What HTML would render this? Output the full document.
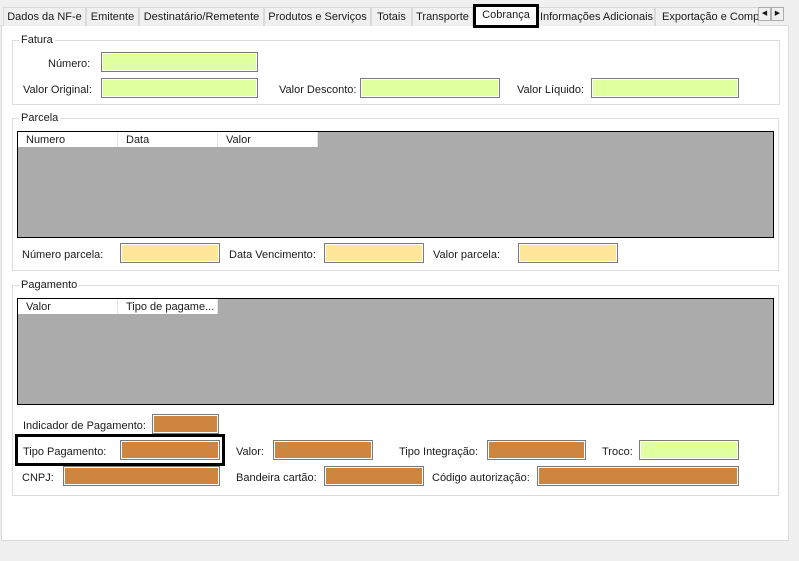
<!DOCTYPE html><html><head><style>
*{margin:0;padding:0;box-sizing:border-box}
body{width:799px;height:561px;background:#f0f0f0;position:relative;overflow:hidden;font-family:"Liberation Sans",sans-serif;font-size:11px;color:#1a1a1a}
div,span{white-space:nowrap}
.a{position:absolute}
.tab{position:absolute;top:7px;height:19px;border:1px solid #dadada;border-bottom:none;background:#f0f0f0;line-height:19px;text-align:center;overflow:hidden}
.g{position:absolute;border:1px solid #dcdcdc}
.gl{position:absolute;top:-8px;left:6px;background:#fff;padding:0 2px;line-height:14px}
.i{position:absolute;height:20px;border:1px solid #7a7a7a;outline:1px solid #fff;outline-offset:-2px}
.gr{background:#e0ff9e}.ye{background:#ffe699}.or{background:#cd853f}
.grid{position:absolute;background:#ababab;border:1px solid #000}
.h{position:absolute;top:0;height:15px;background:#fff;border-right:1px solid #e5e5e5;line-height:16px;padding-left:8px;overflow:hidden}
.l{position:absolute;line-height:14px}
</style></head><body>
<div class="a" style="left:1px;top:25px;width:788px;height:516px;background:#fff;border:1px solid #dadada"></div>
<div class="tab" style="left:3px;width:83px">Dados da NF-e</div>
<div class="tab" style="left:86px;width:53px">Emitente</div>
<div class="tab" style="left:139px;width:125px">Destinatário/Remetente</div>
<div class="tab" style="left:264px;width:107px">Produtos e Serviços</div>
<div class="tab" style="left:371px;width:41px">Totais</div>
<div class="tab" style="left:412px;width:61px">Transporte</div>
<div class="tab" style="left:538px;width:117px">Informações Adicionais</div>
<div class="tab" style="left:655px;width:104px;text-align:left;padding-left:6px">Exportação e Compra</div>
<div class="a" style="left:473px;top:4px;width:66px;height:24px;background:#fff;border:3px solid #000;text-align:center;line-height:17px">Cobrança</div>
<div class="a" style="left:758px;top:7px;width:13px;height:14px;border:1px solid #adadad;background:#f0f0f0;font-size:7px;text-align:center;line-height:12px">◀</div>
<div class="a" style="left:771px;top:7px;width:13px;height:14px;border:1px solid #adadad;background:#f0f0f0;font-size:7px;text-align:center;line-height:12px">▶</div>

<div class="g" style="left:12px;top:40px;width:768px;height:65px"><span class="gl">Fatura</span></div>
<div class="l" style="left:48px;top:57px">Número:</div><div class="i gr" style="left:101px;top:52px;width:157px"></div>
<div class="l" style="left:23px;top:83px">Valor Original:</div><div class="i gr" style="left:101px;top:78px;width:157px"></div>
<div class="l" style="left:279px;top:83px">Valor Desconto:</div><div class="i gr" style="left:360px;top:78px;width:140px"></div>
<div class="l" style="left:517px;top:83px">Valor Líquido:</div><div class="i gr" style="left:591px;top:78px;width:148px"></div>

<div class="g" style="left:12px;top:118px;width:767px;height:153px"><span class="gl">Parcela</span></div>
<div class="grid" style="left:17px;top:131px;width:757px;height:107px">
<div class="h" style="left:0;width:100px">Numero</div><div class="h" style="left:100px;width:100px">Data</div><div class="h" style="left:200px;width:100px">Valor</div></div>
<div class="l" style="left:22px;top:248px">Número parcela:</div><div class="i ye" style="left:120px;top:243px;width:100px"></div>
<div class="l" style="left:229px;top:248px">Data Vencimento:</div><div class="i ye" style="left:324px;top:243px;width:100px"></div>
<div class="l" style="left:433px;top:248px">Valor parcela:</div><div class="i ye" style="left:518px;top:243px;width:100px"></div>

<div class="g" style="left:12px;top:285px;width:767px;height:211px"><span class="gl">Pagamento</span></div>
<div class="grid" style="left:17px;top:298px;width:757px;height:107px">
<div class="h" style="left:0;width:100px">Valor</div><div class="h" style="left:100px;width:100px">Tipo de pagame...</div></div>
<div class="l" style="left:23px;top:419px">Indicador de Pagamento:</div><div class="i or" style="left:152px;top:414px;width:67px"></div>
<div class="a" style="left:15px;top:434px;width:210px;height:32px;border:3px solid #000"></div>
<div class="l" style="left:23px;top:445px">Tipo Pagamento:</div><div class="i or" style="left:120px;top:440px;width:100px"></div>
<div class="l" style="left:236px;top:445px">Valor:</div><div class="i or" style="left:273px;top:440px;width:100px"></div>
<div class="l" style="left:399px;top:445px">Tipo Integração:</div><div class="i or" style="left:487px;top:440px;width:99px"></div>
<div class="l" style="left:602px;top:445px">Troco:</div><div class="i gr" style="left:639px;top:440px;width:100px"></div>
<div class="l" style="left:22px;top:471px">CNPJ:</div><div class="i or" style="left:63px;top:466px;width:157px"></div>
<div class="l" style="left:236px;top:471px">Bandeira cartão:</div><div class="i or" style="left:324px;top:466px;width:100px"></div>
<div class="l" style="left:432px;top:471px">Código autorização:</div><div class="i or" style="left:537px;top:466px;width:202px"></div>
</body></html>
